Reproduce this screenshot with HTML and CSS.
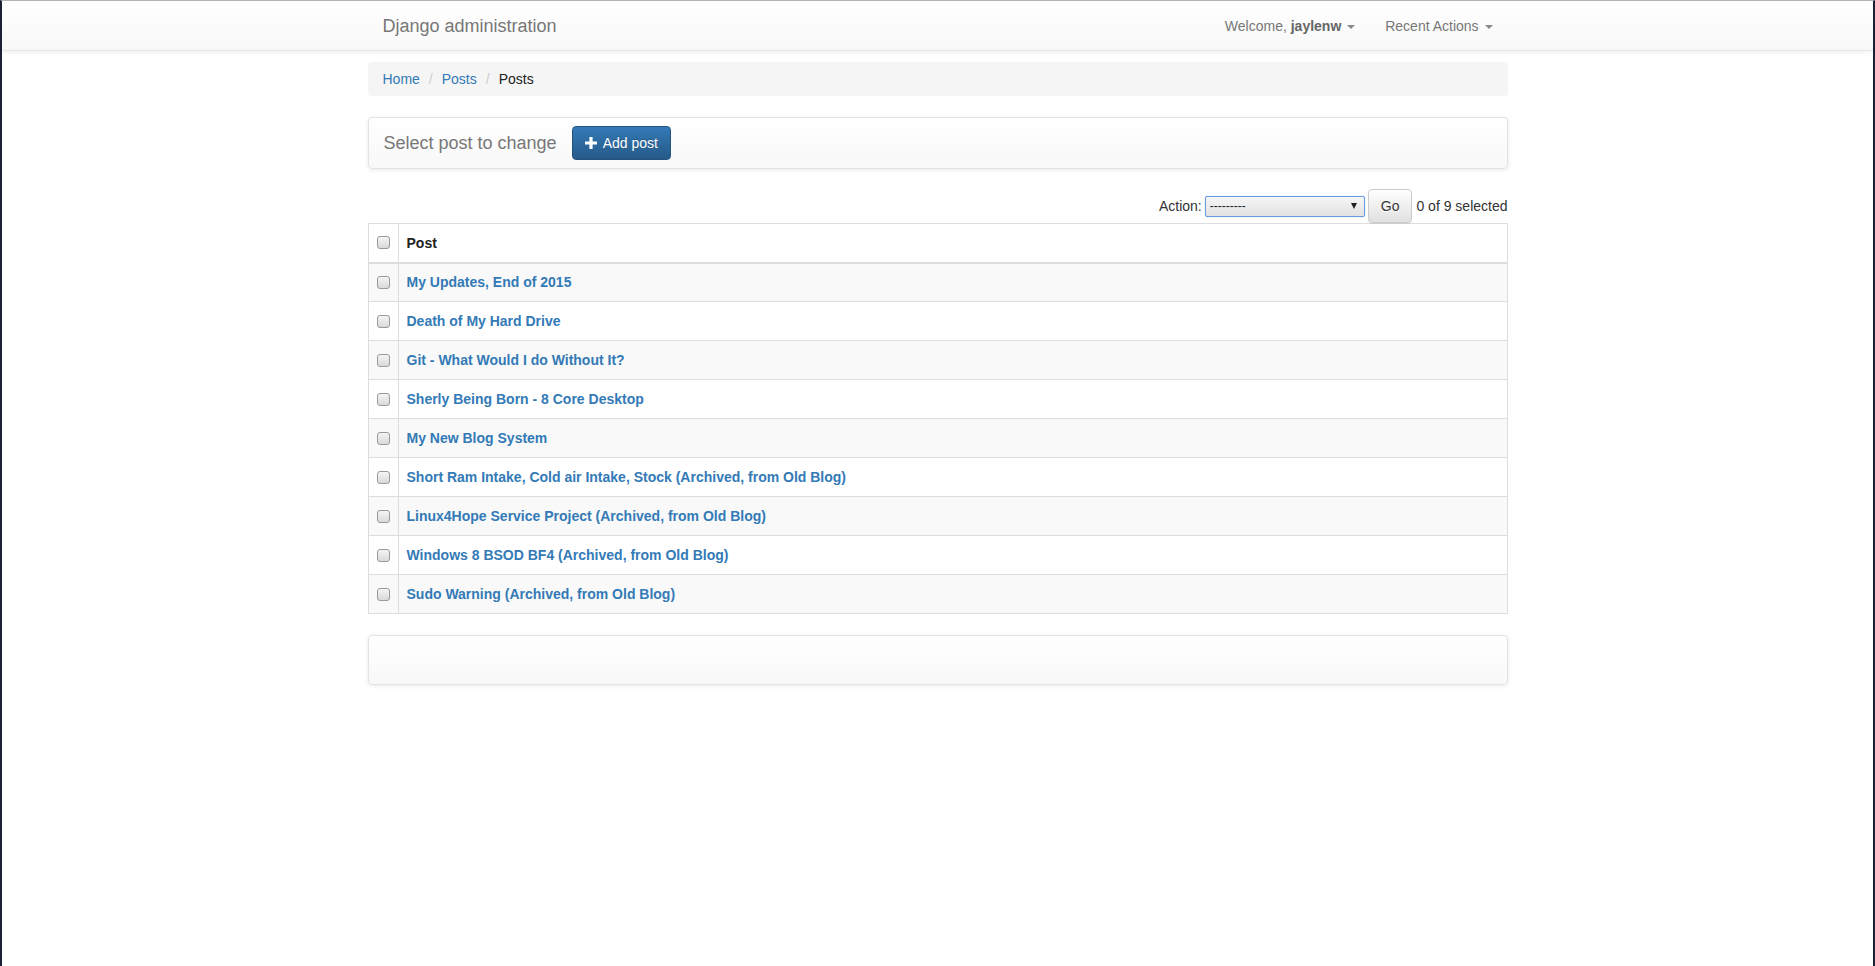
FILE: index.html
```html
<!DOCTYPE html>
<html lang="en">
<head>
  <meta charset="UTF-8" />
  <meta name="viewport" content="width=device-width, initial-scale=1.0" />
  <title>Select post to change | Django site admin</title>
  <link rel="stylesheet" href="styles.css">
</head>
<body>
  <nav class="navbar">
    <div class="container navbar-inner">
      <a class="brand" href="#">Django administration</a>
      <ul class="nav-right">
        <li><a href="#">Welcome, <strong>jaylenw</strong> <span class="caret"></span></a></li>
        <li><a href="#">Recent Actions <span class="caret"></span></a></li>
      </ul>
    </div>
  </nav>

  <div class="container">
    <ol class="breadcrumb">
      <li><a href="#">Home</a></li>
      <li><a href="#">Posts</a></li>
      <li class="active">Posts</li>
    </ol>

    <div class="toolbar">
      <span class="toolbar-title">Select post to change</span>
      <a class="btn btn-primary" href="#">
        <svg class="icon-plus" width="12" height="12" viewBox="0 0 12 12"><path d="M4.4 0h3.2v4.4H12v3.2H7.6V12H4.4V7.6H0V4.4h4.4z" fill="#fff"/></svg>
        Add post
      </a>
    </div>

    <div class="actions">
      <label>Action:</label>
      <span class="select-wrap">
        <select class="action-select">
          <option>---------</option>
          <option>Delete selected posts</option>
        </select>
      </span>
      <button class="btn btn-default" type="button">Go</button>
      <span class="action-counter">0 of 9 selected</span>
    </div>

    <table class="result-list">
      <thead>
        <tr>
          <th class="col-check"><input type="checkbox"></th>
          <th>Post</th>
        </tr>
      </thead>
      <tbody>
        <tr><td class="col-check"><input type="checkbox"></td><td><a href="#">My Updates, End of 2015</a></td></tr>
        <tr><td class="col-check"><input type="checkbox"></td><td><a href="#">Death of My Hard Drive</a></td></tr>
        <tr><td class="col-check"><input type="checkbox"></td><td><a href="#">Git - What Would I do Without It?</a></td></tr>
        <tr><td class="col-check"><input type="checkbox"></td><td><a href="#">Sherly Being Born - 8 Core Desktop</a></td></tr>
        <tr><td class="col-check"><input type="checkbox"></td><td><a href="#">My New Blog System</a></td></tr>
        <tr><td class="col-check"><input type="checkbox"></td><td><a href="#">Short Ram Intake, Cold air Intake, Stock (Archived, from Old Blog)</a></td></tr>
        <tr><td class="col-check"><input type="checkbox"></td><td><a href="#">Linux4Hope Service Project (Archived, from Old Blog)</a></td></tr>
        <tr><td class="col-check"><input type="checkbox"></td><td><a href="#">Windows 8 BSOD BF4 (Archived, from Old Blog)</a></td></tr>
        <tr><td class="col-check"><input type="checkbox"></td><td><a href="#">Sudo Warning (Archived, from Old Blog)</a></td></tr>
      </tbody>
    </table>

    <div class="toolbar toolbar-footer"></div>
  </div>
</body>
</html>
```

FILE: styles.css
```css
* {
  box-sizing: border-box;
}

html, body {
  height: 100%;
}

body {
  margin: 0;
  font-family: "Liberation Sans", Arial, Helvetica, sans-serif;
  font-size: 14px;
  line-height: 20px;
  color: #333;
  background: #fff;
  border-top: 1px solid #b4b4b4;
  border-left: 2px solid #1d2137;
  border-right: 2px solid #1d2137;
}

a {
  color: #337ab7;
  text-decoration: none;
}

.container {
  width: 1170px;
  padding: 0 15px;
  margin: 0 auto;
}

/* top bar */
.navbar {
  height: 50px;
  background: linear-gradient(to bottom, #fff 0, #f8f8f8 100%);
  border-bottom: 1px solid #e7e7e7;
  box-shadow: 0 1px 5px rgba(0, 0, 0, 0.075);
}

.navbar-inner {
  display: flex;
  justify-content: space-between;
  align-items: center;
  height: 100%;
}

.brand {
  padding: 0 15px;
  font-size: 18px;
  line-height: 20px;
  color: #777;
}

.nav-right {
  display: flex;
  list-style: none;
  margin: 0;
  padding: 0;
}

.nav-right a {
  display: block;
  padding: 0 15px;
  color: #777;
}

.nav-right strong {
  font-weight: bold;
  color: #666;
}

.caret {
  display: inline-block;
  width: 0;
  height: 0;
  margin-left: 2px;
  vertical-align: middle;
  border-top: 4px solid #888;
  border-left: 4px solid transparent;
  border-right: 4px solid transparent;
}

/* breadcrumbs */
.breadcrumb {
  list-style: none;
  margin: 11px 0 21px;
  padding: 7px 15px;
  background: #f5f5f5;
  border-radius: 4px;
  display: flex;
}

.breadcrumb li + li::before {
  content: "/";
  padding: 0 9px 0 9px;
  color: #ccc;
}

.breadcrumb .active {
  color: #222;
}

/* header panel */
.toolbar {
  display: flex;
  align-items: center;
  height: 52px;
  margin-bottom: 20px;
  background: linear-gradient(to bottom, #fff 0, #f8f8f8 100%);
  border: 1px solid #e3e3e3;
  border-radius: 4px;
  box-shadow: 0 1px 4px rgba(0, 0, 0, 0.09);
}

.toolbar-title {
  padding: 0 15px;
  font-size: 18px;
  color: #777;
}

.toolbar-footer {
  height: 50px;
  margin-top: 21px;
}

.btn {
  display: inline-flex;
  align-items: center;
  height: 34px;
  padding: 6px 12px;
  font-family: inherit;
  font-size: 14px;
  line-height: 20px;
  border: 1px solid transparent;
  border-radius: 4px;
  cursor: pointer;
}

.btn-primary {
  color: #fff;
  background: linear-gradient(to bottom, #337ab7 0, #265a88 100%);
  border-color: #245580;
  text-shadow: 0 -1px 0 rgba(0, 0, 0, 0.2);
}

.btn-default {
  color: #333;
  background: linear-gradient(to bottom, #fff 0, #e0e0e0 100%);
  border-color: #ccc;
  text-shadow: 0 1px 0 #fff;
  box-shadow: inset 0 1px 0 rgba(255, 255, 255, 0.15), 0 1px 1px rgba(0, 0, 0, 0.075);
}

.icon-plus {
  margin-right: 6px;
}

/* actions */
.actions {
  display: flex;
  justify-content: flex-end;
  align-items: center;
  height: 34px;
  margin-top: 1px;
}

.actions label {
  margin-right: 3px;
}

.select-wrap {
  position: relative;
  display: inline-block;
}

.select-wrap::after {
  content: "";
  position: absolute;
  right: 8px;
  top: 7px;
  border-top: 6px solid #222;
  border-left: 3px solid transparent;
  border-right: 3px solid transparent;
  pointer-events: none;
}

.action-select {
  display: block;
  width: 160px;
  height: 21px;
  padding: 0 4px;
  font-family: inherit;
  font-size: 12px;
  color: #222;
  appearance: none;
  -webkit-appearance: none;
  background: linear-gradient(to bottom, #f6f6f6 0, #e2e2e2 100%);
  border: 1px solid #6a9be0;
  border-radius: 2px;
  box-shadow: 0 0 1px #6a9be0;
}

.actions .btn-default {
  margin: 0 4px 0 3px;
}

/* results table */
.result-list {
  width: 100%;
  border-collapse: collapse;
  border: 1px solid #ddd;
}

.result-list th,
.result-list td {
  padding: 8px;
  text-align: left;
  vertical-align: middle;
  border: 1px solid #ddd;
}

.result-list th {
  height: 39px;
  font-weight: bold;
  color: #222;
  border-bottom: 2px solid #ddd;
}

.result-list td {
  height: 39px;
}

.result-list tbody tr:nth-child(odd) {
  background: #f9f9f9;
}

.result-list td a {
  font-weight: bold;
}

.result-list .col-check {
  width: 30px;
  padding: 0 8px;
  text-align: center;
}

input[type="checkbox"] {
  appearance: none;
  -webkit-appearance: none;
  display: block;
  width: 13px;
  height: 13px;
  margin: 0;
  border: 1px solid #9a9a9a;
  border-radius: 3px;
  background: linear-gradient(to bottom, #f5f5f5 0, #d9d9d9 100%);
}
```
